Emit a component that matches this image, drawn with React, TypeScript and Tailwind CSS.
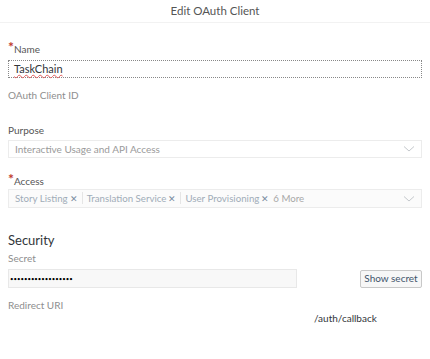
import React from "react";

const Chevron = () => (
  <svg width="12" height="8" viewBox="0 0 12 8" fill="none" className="shrink-0">
    <path d="M1 1.5 L6 6 L11 1.5" stroke="#c4c8cc" strokeWidth="1" />
  </svg>
);

const Token = ({ label }: { label: string }) => (
  <div className="flex items-center gap-[2px] pr-[4px] mr-[4px] border-r border-[#e5e5e5] h-[12px] leading-none">
    <span>{label}</span>
    <span className="text-[9px] text-[#7a8ca0]">✕</span>
  </div>
);

const Star = () => (
  <span className="text-[#c0392b] text-[14px] leading-[10px] font-bold">*</span>
);

export default function App() {
  return (
    <div
      className="w-[430px] h-[359px] bg-white text-[#32363a] overflow-hidden"
      style={{ fontFamily: 'Lato, "Open Sans", sans-serif' }}
    >
      <div className="h-[23px] flex items-center justify-center text-[11.5px] text-[#555] border-b border-[#f2f2f2]">
        Edit OAuth Client
      </div>
      <div className="px-[8px] pt-[19px]">
        <div className="text-[10px] leading-[14px] text-[#555] flex">
          <Star />Name
        </div>
        <div className="mt-[4px] h-[18px] w-[414px] border border-dotted border-[#888] bg-white flex items-center pl-[5px] text-[11px] text-[#32363a]">
          <span className="underline decoration-wavy decoration-[#e05a5a] decoration-[1px]">TaskChain</span>
        </div>
        <div className="mt-[10px] text-[10px] leading-[14px] text-[#8e8e8e]">OAuth Client ID</div>

        <div className="mt-[21px] text-[10px] leading-[14px] text-[#555]">Purpose</div>
        <div className="mt-[3px] h-[18px] w-[414px] border border-[#ececec] flex items-center justify-between pl-[6px] pr-[6px] text-[10px] text-[#9a9a9a]">
          <span>Interactive Usage and API Access</span>
          <Chevron />
        </div>

        <div className="mt-[16px] text-[10px] leading-[14px] text-[#555] flex">
          <Star />Access
        </div>
        <div className="mt-[1px] h-[19px] w-[414px] border border-[#ececec] bg-[#fbfbfb] flex items-center justify-between pl-[6px] pr-[6px] text-[9.7px] text-[#a0acb8]">
          <div className="flex items-center">
            <Token label="Story Listing" />
            <Token label="Translation Service" />
            <div className="flex items-center gap-[2px] leading-none">
              <span>User Provisioning</span>
              <span className="text-[9px] text-[#7a8ca0]">✕</span>
            </div>
            <span className="ml-[4px] text-[#a8a8a8]">6 More</span>
          </div>
          <Chevron />
        </div>

        <div className="mt-[23px] text-[13px] leading-[18px] text-[#32363a]">Security</div>
        <div className="mt-[2px] text-[10px] leading-[14px] text-[#8e8e8e]">Secret</div>
        <div className="mt-[4px] flex items-center justify-between w-[414px]">
          <div className="h-[19px] w-[289px] border border-[#e8e8e8] bg-[#f8f8f8] flex items-center pl-[1px] text-[6px] tracking-[0px] text-black">
            ••••••••••••••••••
          </div>
          <div className="h-[18px] w-[62px] border border-[#c8c8c8] rounded-[2px] bg-[#f7f7f7] flex items-center justify-center text-[10px] text-[#3f546b]">
            Show secret
          </div>
        </div>
        <div className="mt-[10px] text-[10px] leading-[14px] text-[#8e8e8e]">Redirect URI</div>
        <div className="mt-[-1px] pl-[306px] text-[10px] leading-[14px] text-[#32363a]">/auth/callback</div>
      </div>
    </div>
  );
}
